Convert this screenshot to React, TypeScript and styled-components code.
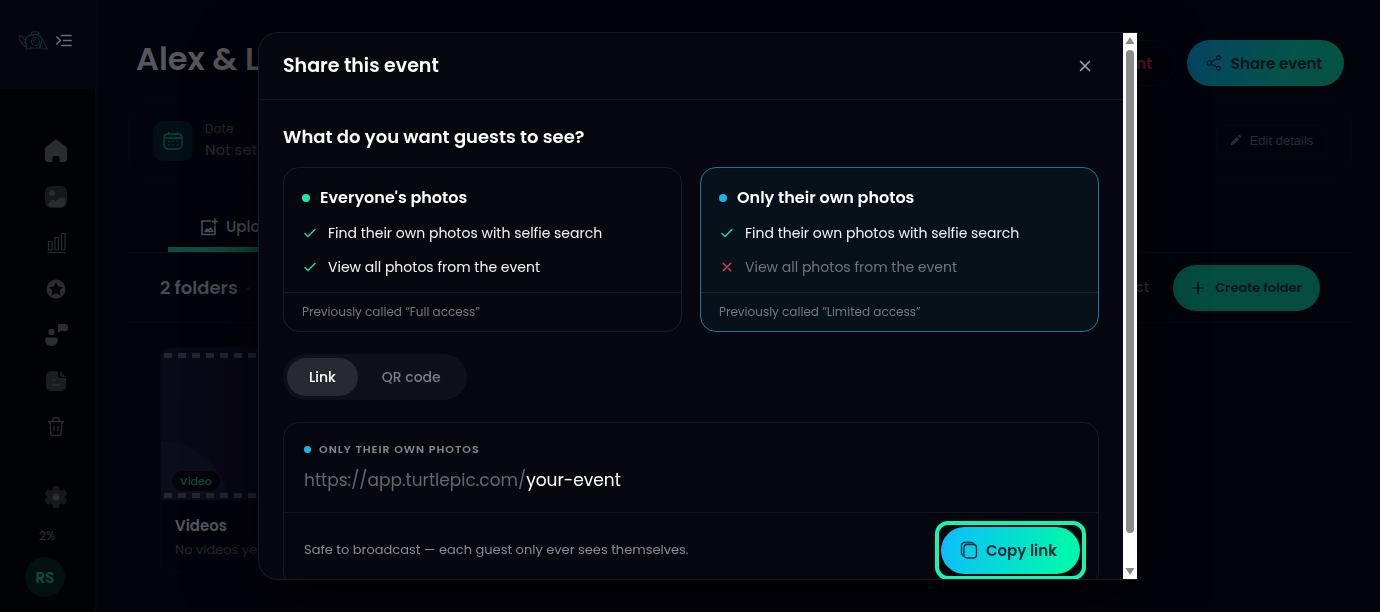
import React from "react";
import styled, { createGlobalStyle, css } from "styled-components";

const GlobalStyle = createGlobalStyle`
  *, *::before, *::after { box-sizing: border-box; }
  html, body { margin: 0; background: #03030c; }
  body, button, input { font-family: Poppins, Inter, "Open Sans", sans-serif; }
  body { color: #fff; overflow: hidden; }
  h1, h2, h3, p, ul { margin: 0; padding: 0; font-weight: inherit; }
  ul { list-style: none; }
  button { border: 0; background: none; padding: 0; color: inherit; cursor: pointer; }
  a { color: inherit; text-decoration: none; }
  svg { display: block; flex: none; }
`;

/* ---------- page behind the dialog ---------- */

const Page = styled.div`
  display: flex;
  min-height: 100vh;
  background: #03030c;
`;

const Sidebar = styled.aside`
  flex: 0 0 97px;
  display: flex;
  flex-direction: column;
`;

const Brand = styled.div`
  height: 89px;
  padding: 8px 0 16px 18px;
  display: flex;
  align-items: center;
  gap: 7px;
  background: #04050e;
  color: #6c6c70;
`;

const SideNav = styled.nav`
  flex: 1;
  display: flex;
  flex-direction: column;
  align-items: flex-start;
  background: #010204;
  border-right: 2px solid #08090e;
  padding-top: 50px;
  color: #2b2c30;
`;

const SideLink = styled.a<{ $gap?: number }>`
  display: flex;
  width: 24px;
  height: 24px;
  margin: 0 0 ${(p) => p.$gap ?? 22}px 44px;
  align-items: center;
  justify-content: center;
`;

const Usage = styled.span`
  margin: 0 0 11px 39px;
  font-size: 12px;
  line-height: 20px;
  color: #323338;
`;

const Avatar = styled.button`
  width: 40px;
  height: 40px;
  margin-left: 25px;
  border-radius: 50%;
  background: #02110f;
  color: #104c3c;
  font-size: 15px;
  font-weight: 600;
`;

const Main = styled.main`
  flex: 1;
  min-width: 0;
  padding: 32px 28px 0 31px;
`;

const PageHeader = styled.header`
  display: flex;
  align-items: center;
  height: 62px;
  padding: 0 8px;
  gap: 12px;
`;

const PageTitle = styled.h1`
  flex: 1;
  padding-bottom: 8px;
  font-size: 32px;
  line-height: 40px;
  font-weight: 600;
  color: #56565c;
`;

const PillButton = styled.button<{ $kind: "share" | "create" | "danger" | "plain" }>`
  display: flex;
  align-items: center;
  justify-content: center;
  height: 46px;
  border-radius: 23px;
  font-weight: 600;
  white-space: nowrap;
  ${(p) =>
    p.$kind === "share" &&
    css`
      width: 157px;
      padding-right: 4px;
      gap: 8px;
      font-size: 15px;
      color: #03151b;
      background: linear-gradient(110deg, #044463, #055349 65%, #055341);
    `}
  ${(p) =>
    p.$kind === "create" &&
    css`
      width: 147px;
      gap: 10px;
      font-size: 13px;
      color: #03151b;
      background: #044d40;
    `}
  ${(p) =>
    p.$kind === "danger" &&
    css`
      padding: 0 22px;
      border: 1px solid #08080f;
      font-size: 15px;
      color: #5a1623;
    `}
  ${(p) =>
    p.$kind === "plain" &&
    css`
      padding: 0 12px;
      font-size: 14px;
      font-weight: 500;
      color: #36363c;
    `}
`;

const DateCard = styled.section`
  display: flex;
  align-items: center;
  height: 78px;
  margin-top: 8px;
  padding: 0 24px;
  gap: 12px;
  border: 1px solid #05050f;
  border-radius: 14px;
`;

const DateTile = styled.div`
  display: grid;
  place-items: center;
  width: 40px;
  height: 40px;
  border-radius: 10px;
  background: #020f13;
  color: #10473d;
`;

const DateText = styled.div`
  flex: 1;
  padding-bottom: 2px;
  color: #2c2c33;
  font-size: 15px;
  line-height: 22px;
`;

const DateLabel = styled.div`
  color: #26262d;
  font-size: 12px;
  line-height: 20px;
`;

const EditButton = styled.button`
  display: flex;
  align-items: center;
  justify-content: center;
  gap: 8px;
  width: 111px;
  height: 32px;
  padding-bottom: 2px;
  border: 1px solid #05060e;
  border-radius: 8px;
  font-family: "Liberation Sans", sans-serif;
  font-size: 13px;
  color: #2b2b32;
`;

const Tabs = styled.nav`
  display: flex;
  height: 73px;
  padding-left: 40px;
  align-items: flex-end;
  border-bottom: 1px solid #090a14;
`;

const Tab = styled.a`
  display: flex;
  align-items: center;
  width: 150px;
  height: 46px;
  padding: 0 0 0 32px;
  gap: 8px;
  border-bottom: 5px solid #104c40;
  font-size: 15px;
  font-weight: 500;
  color: #515158;
`;

const FolderBar = styled.div`
  display: flex;
  align-items: center;
  height: 70px;
  padding: 0 32px;
  gap: 12px;
  border-bottom: 1px solid #07080f;
`;

const FolderCount = styled.h2`
  flex: 1;
  font-size: 18px;
  font-weight: 600;
  color: #4a4a52;
`;

const Separator = styled.span`
  margin-left: 8px;
  color: #16161e;
`;

const Folder = styled.article`
  width: 240px;
  margin: 24px 0 0 32px;
  border: 1px solid #06060f;
  border-radius: 10px;
  overflow: hidden;
`;

const Film = styled.div`
  display: flex;
  flex-direction: column;
  justify-content: space-between;
  height: 152px;
  padding: 5px 3px 2px;
  background: radial-gradient(circle at 0 162px, #0d0c1a 68px, transparent 69px),
    linear-gradient(100deg, #0a0918, #06060f);
`;

const Perforation = styled.div`
  height: 5px;
  background: repeating-linear-gradient(90deg, #25252e 0 8px, transparent 8px 14px);
`;

const Tag = styled.span`
  align-self: flex-start;
  margin: auto 0 2px 8px;
  padding: 0 8px;
  border-radius: 10px;
  background: #02060b;
  color: #104c40;
  font-size: 11px;
  line-height: 20px;
  font-weight: 500;
`;

const FolderText = styled.div`
  padding: 14px 14px 10px;
  color: #27272e;
  font-size: 13px;
  line-height: 24px;
`;

const FolderName = styled.h3`
  color: #56565c;
  font-size: 15px;
  line-height: 24px;
  font-weight: 600;
`;

/* ---------- dialog ---------- */

const Overlay = styled.div`
  position: fixed;
  inset: 0;
  display: flex;
  justify-content: center;
  padding: 32px 16px 32px 31px;
`;

const Dialog = styled.section`
  display: flex;
  width: 100%;
  max-width: 879px;
  height: 100%;
  border: 1px solid #191a20;
  border-right: 0;
  border-radius: 20px 0 0 20px;
  background: #07080f;
  overflow: hidden;
  box-shadow: 0 24px 64px rgba(0, 0, 0, 0.75);
`;

const DialogContent = styled.div`
  flex: 1;
  min-width: 0;
  overflow: hidden;
`;

const DialogHeader = styled.header`
  display: flex;
  align-items: center;
  justify-content: space-between;
  height: 67px;
  padding: 0 32px 0 24px;
  border-bottom: 1px solid #13141a;
`;

const DialogTitle = styled.h2`
  font-size: 19px;
  line-height: 28px;
  font-weight: 600;
`;

const CloseButton = styled.button`
  color: #a5a5a9;
`;

const DialogBody = styled.div`
  padding: 22px 24px;
`;

const Question = styled.h3`
  font-size: 18px;
  line-height: 30px;
  font-weight: 600;
`;

const Choices = styled.div`
  display: grid;
  grid-template-columns: 1fr 1fr;
  gap: 18px;
  margin-top: 15px;
`;

const Choice = styled.button<{ $on?: boolean }>`
  display: flex;
  flex-direction: column;
  height: 165px;
  border: 1px solid ${(p) => (p.$on ? "#23749a" : "#1c1d23")};
  border-radius: 16px;
  background: ${(p) => (p.$on ? "#06111a" : "transparent")};
  text-align: left;
  overflow: hidden;
`;

const ChoiceTitle = styled.span`
  display: flex;
  align-items: center;
  gap: 10px;
  padding: 18px 18px 1px;
  font-size: 16px;
  line-height: 24px;
  font-weight: 600;
`;

const Dot = styled.span<{ $color: string; $small?: boolean }>`
  width: ${(p) => (p.$small ? 7 : 8)}px;
  height: ${(p) => (p.$small ? 7 : 8)}px;
  border-radius: 50%;
  background: ${(p) => p.$color};
`;

const Feature = styled.span<{ $off?: boolean }>`
  display: flex;
  align-items: center;
  gap: 10px;
  margin-top: 10px;
  padding-left: 18px;
  font-size: 14px;
  line-height: 24px;
  color: ${(p) => (p.$off ? "#70757b" : "#f4f4f5")};
`;

const ChoiceNote = styled.span<{ $on?: boolean }>`
  width: 100%;
  margin-top: auto;
  padding: 0 18px;
  border-top: 1px solid ${(p) => (p.$on ? "#15242d" : "#1a1b21")};
  font-size: 12px;
  line-height: 38px;
  color: #76787e;
`;

const Segments = styled.div`
  display: inline-flex;
  gap: 2px;
  height: 46px;
  margin-top: 22px;
  padding: 4px;
  border-radius: 23px;
  background: #101118;
  vertical-align: top;
`;

const Segment = styled.button<{ $on?: boolean }>`
  padding: 0 22px;
  border-radius: 19px;
  background: ${(p) => (p.$on ? "#292a31" : "transparent")};
  color: ${(p) => (p.$on ? "#fff" : "#7c7d82")};
  font-size: 14px;
  font-weight: 500;
`;

const LinkCard = styled.section`
  margin-top: 22px;
  border: 1px solid #191a20;
  border-radius: 16px;
`;

const LinkInfo = styled.div`
  height: 89px;
  padding: 17px 20px 0;
`;

const LinkLabel = styled.div`
  display: flex;
  align-items: center;
  gap: 8px;
  font-size: 11px;
  line-height: 18px;
  font-weight: 600;
  letter-spacing: 1px;
  color: #85868b;
`;

const LinkUrl = styled.a`
  display: inline-block;
  margin-top: 8px;
  font-size: 17px;
  line-height: 28px;
`;

const UrlHost = styled.span`
  color: #66676c;
`;

const LinkActions = styled.div`
  display: flex;
  align-items: center;
  justify-content: space-between;
  height: 75px;
  padding: 0 12px 0 20px;
  border-top: 1px solid #14151b;
  font-size: 13px;
  color: #8b8c91;
`;

const Highlight = styled.div`
  border: 4px solid #14f5b4;
  border-radius: 13px;
  padding: 2px;
  background: #03040a;
`;

const CopyButton = styled.button`
  display: flex;
  align-items: center;
  justify-content: center;
  gap: 8px;
  width: 139px;
  height: 47px;
  padding-right: 4px;
  border-radius: 24px;
  background: linear-gradient(105deg, #0cbcff, #00f5b0 85%);
  color: #06283a;
  font-size: 15px;
  font-weight: 600;
`;

const Scrollbar = styled.div`
  flex: 0 0 14px;
  display: flex;
  flex-direction: column;
  align-items: center;
  padding: 4px 0;
  gap: 6px;
  background: #fdfdfd;
  color: #8a8a8a;
`;

const ScrollThumb = styled.div`
  width: 8px;
  flex: 484 1 0;
  border-radius: 4px;
  background: #8a8a8a;
`;

const ScrollSpace = styled.div`
  flex: 23 1 0;
`;

/* ---------- icons ---------- */

const Stroke = ({ size, width = 1.5, box = 24, children }: { size: number; width?: number; box?: number; children: React.ReactNode }) => (
  <svg width={size} height={size} viewBox={`0 0 ${box} ${box}`} fill="none" stroke="currentColor" strokeWidth={width} strokeLinecap="round" strokeLinejoin="round" aria-hidden="true">
    {children}
  </svg>
);

const Solid = ({ children }: { children: React.ReactNode }) => (
  <svg width="24" height="24" viewBox="0 0 24 24" fill="currentColor" aria-hidden="true">
    {children}
  </svg>
);

const Turtle = () => (
  <svg width="31" height="20" viewBox="0 0 31 20" fill="none" stroke="#152a35" strokeWidth="1.1" strokeLinejoin="round" strokeLinecap="round" aria-hidden="true">
    <path d="M1 7.500c-.5-2.400 2-3.500 3.500-2 1 1 .5 2.500 1.500 3 1.500.5 2-2 4-3.500M1 7.500c0 2 2 2.500 3 4.500 1 2 2.500 3.500 5 4l-1 2h4l1-1.500M10 5c-3 3-3 7-1 11M10 5l4-1h6l3 2c3 3 3 7 6.500 12h-6l-1.500-2M13 17h8l1.500-4M13.500 1h7v2.500h-7zM6 11l3 2M24 9l-2 7" />
    <circle cx="17.500" cy="10.500" r="4" />
    <path d="M15.500 10.500a2 2 0 0 1 2-2" />
  </svg>
);

const Check = () => (
  <Stroke size={16} box={16} width={1.5}>
    <path d="m3 8.500 3 3 7-7" stroke="#2fd0a0" />
  </Stroke>
);

const Cross = () => (
  <Stroke size={16} box={16} width={1.4}>
    <path d="m4.200 4.200 7.600 7.600m0-7.600-7.600 7.600" stroke="#d0425c" />
  </Stroke>
);

export default function App() {
  return (
    <>
      <GlobalStyle />
      <Page>
        <Sidebar>
          <Brand>
            <Turtle />
            <Stroke size={16} box={16} width={1.5}>
              <path d="m.8 4 3.600 3.500L.8 11M5.500 2.500h9.700M7.500 7.500h7.700M5.500 12.500h9.700" />
            </Stroke>
          </Brand>
          <SideNav aria-label="Main">
            <SideLink href="#home" aria-label="Home">
              <Solid>
                <path d="M10.400 1.200a2.600 2.600 0 0 1 3.200 0l8.200 6.500c.9.700 1.200 1.500 1.200 2.600V20a3 3 0 0 1-3 3h-4.500v-4.500a1.500 1.500 0 0 0-1.500-1.500h-4a1.500 1.500 0 0 0-1.500 1.500V23H4a3 3 0 0 1-3-3v-9.700c0-1.100.300-1.900 1.200-2.600z" />
              </Solid>
            </SideLink>
            <SideLink href="#photos" aria-label="Photos">
              <Solid>
                <rect x="1" y="1" width="22" height="22" rx="6" fill="#17181c" />
                <circle cx="8" cy="8" r="3" />
                <path d="M4 20c2-4.500 5-6 8-3.500 2-4 5.500-5 9-2.500v4a4 4 0 0 1-4 4H7a4 4 0 0 1-3-2z" />
              </Solid>
            </SideLink>
            <SideLink href="#analytics" aria-label="Analytics">
              <Stroke size={24} width={1.2}>
                <path d="M4 21.500h17M4.500 10.500h3.500v8.500h-3.500zM11 6.500h3.500v12.500h-3.500zM17.500 2.500h3.500v16.500h-3.500z" />
              </Stroke>
            </SideLink>
            <SideLink href="#favorites" aria-label="Favorites">
              <Solid>
                <circle cx="12" cy="12" r="9.500" />
                <path fill="#010204" d="m12 5 2.200 4.500 4.900.700-3.600 3.400.9 4.900-4.400-2.400-4.400 2.400.9-4.900-3.600-3.400 4.900-.7z" />
              </Solid>
            </SideLink>
            <SideLink href="#guests" aria-label="Guests">
              <Solid>
                <circle cx="7.500" cy="9" r="3.200" />
                <path d="M3 14.500h9a2 2 0 0 1 2 2c0 4-3 6.500-6.500 6.500S1 20.500 1 16.500a2 2 0 0 1 2-2zM15 1h7a2 2 0 0 1 2 2v3a2 2 0 0 1-2 2h-5l-3 1.500V3a2 2 0 0 1 1-2z" />
              </Solid>
            </SideLink>
            <SideLink href="#documents" aria-label="Documents">
              <Solid>
                <path fill="#1c1d21" d="M7 2h7v4a3 3 0 0 0 3 3h5v8a5 5 0 0 1-5 5H7a5 5 0 0 1-5-5V7a5 5 0 0 1 5-5zM16 2l6 6h-4a2 2 0 0 1-2-2z" />
                <path d="M8 11h4M8 16h8" stroke="currentColor" strokeWidth="1.500" />
              </Solid>
            </SideLink>
            <SideLink href="#trash" aria-label="Trash" $gap={46}>
              <Stroke size={24} width={1.400}>
                <path d="M4.500 6.500h15M9 6V4.500A1.500 1.500 0 0 1 10.500 3h3A1.500 1.500 0 0 1 15 4.500V6M6 7l.8 11.500a2 2 0 0 0 2 2h6.400a2 2 0 0 0 2-2L18 7M10 11.500v4M14 11.500v4" />
              </Stroke>
            </SideLink>
            <SideLink href="#settings" aria-label="Settings" $gap={17}>
              <Solid>
                <path fill="#17181c" stroke="#17181c" strokeWidth="2" strokeLinejoin="round" d="M10 2h4l.8 3.500 2 1.100L20 5.500l2 3.500-2.500 2.500v1L22 15l-2 3.500-3.200-1.100-2 1.100L14 22h-4l-.8-3.500-2-1.100L4 18.500 2 15l2.500-2.500v-1L2 9l2-3.500 3.200 1.100 2-1.100z" />
                <circle cx="12" cy="12" r="3.500" />
              </Solid>
            </SideLink>
            <Usage>2%</Usage>
            <Avatar>RS</Avatar>
          </SideNav>
        </Sidebar>
        <Main>
          <PageHeader>
            <PageTitle>Alex &amp; L</PageTitle>
            <PillButton $kind="danger">Delete event</PillButton>
            <PillButton $kind="share">
              <Stroke size={18}>
                <circle cx="6" cy="12" r="3" />
                <circle cx="18" cy="5" r="2.500" />
                <circle cx="18" cy="19" r="2.500" />
                <path d="m8.500 10.500 7-4M8.500 13.500l7 4" />
              </Stroke>
              Share event
            </PillButton>
          </PageHeader>
          <DateCard>
            <DateTile>
              <Stroke size={20} box={20} width={1.300}>
                <path d="M5 3h10a4 4 0 0 1 4 3.500V14a4 4 0 0 1-4 4H5a4 4 0 0 1-4-4V6.500A4 4 0 0 1 5 3zM1.500 7h17M5.500 1.500V3M14.500 1.500V3" />
                <path d="M5.500 10.500h.5M9.800 10.500h.5M14 10.500h.5M5.500 14h.5M9.800 14h.5M14 14h.5" strokeWidth="1" />
              </Stroke>
            </DateTile>
            <DateText>
              <DateLabel>Date</DateLabel>
              Not set
            </DateText>
            <EditButton>
              <svg width="12" height="12" viewBox="0 0 14 14" fill="currentColor" aria-hidden="true">
                <path d="m1 13 .8-3.500 6.400-6.400 2.700 2.700-6.400 6.400zM9 2.300l.9-.9a1.500 1.500 0 0 1 2.100 0l.6.6a1.500 1.500 0 0 1 0 2.100l-.9.900z" />
              </svg>
              Edit details
            </EditButton>
          </DateCard>
          <Tabs aria-label="Event sections">
            <Tab href="#uploads">
              <Stroke size={18} box={18} width={1.500}>
                <path d="M10.500 3H2v13.500h13V8M15 1v5M12.500 3.500h5M5 13.500l2-2.500 1.500 1.500 2-2.500 2.500 3.500z" />
              </Stroke>
              Uploads
            </Tab>
          </Tabs>
          <FolderBar>
            <FolderCount>
              2 folders<Separator>·</Separator>
            </FolderCount>
            <PillButton $kind="plain">Select</PillButton>
            <PillButton $kind="create">
              <Stroke size={14} box={14} width={1.600}>
                <path d="M7 1.200v11.600M1.200 7h11.600" />
              </Stroke>
              Create folder
            </PillButton>
          </FolderBar>
          <Folder>
            <Film>
              <Perforation />
              <Tag>Video</Tag>
              <Perforation />
            </Film>
            <FolderText>
              <FolderName>Videos</FolderName>
              No videos yet
            </FolderText>
          </Folder>
        </Main>
      </Page>

      <Overlay>
        <Dialog role="dialog" aria-modal="true" aria-labelledby="share-title">
          <DialogContent>
            <DialogHeader>
              <DialogTitle id="share-title">Share this event</DialogTitle>
              <CloseButton aria-label="Close">
                <Stroke size={12} box={12} width={1.500}>
                  <path d="m1.500 1.500 9 9m0-9-9 9" />
                </Stroke>
              </CloseButton>
            </DialogHeader>
            <DialogBody>
              <Question>What do you want guests to see?</Question>
              <Choices>
                <Choice aria-pressed="false">
                  <ChoiceTitle>
                    <Dot $color="#1fe5ae" />
                    Everyone's photos
                  </ChoiceTitle>
                  <Feature>
                    <Check />
                    Find their own photos with selfie search
                  </Feature>
                  <Feature>
                    <Check />
                    View all photos from the event
                  </Feature>
                  <ChoiceNote>Previously called “Full access”</ChoiceNote>
                </Choice>
                <Choice $on aria-pressed="true">
                  <ChoiceTitle>
                    <Dot $color="#1bb5ea" />
                    Only their own photos
                  </ChoiceTitle>
                  <Feature>
                    <Check />
                    Find their own photos with selfie search
                  </Feature>
                  <Feature $off>
                    <Cross />
                    View all photos from the event
                  </Feature>
                  <ChoiceNote $on>Previously called “Limited access”</ChoiceNote>
                </Choice>
              </Choices>
              <Segments>
                <Segment $on aria-pressed="true">Link</Segment>
                <Segment aria-pressed="false">QR code</Segment>
              </Segments>
              <LinkCard>
                <LinkInfo>
                  <LinkLabel>
                    <Dot $small $color="#1bb5ea" />
                    ONLY THEIR OWN PHOTOS
                  </LinkLabel>
                  <LinkUrl href="#event">
                    <UrlHost>https://app.turtlepic.com/</UrlHost>your-event
                  </LinkUrl>
                </LinkInfo>
                <LinkActions>
                  <span>Safe to broadcast — each guest only ever sees themselves.</span>
                  <Highlight>
                    <CopyButton>
                      <Stroke size={18} box={18} width={1.300}>
                        <rect x="4" y="3.500" width="12.500" height="13.500" rx="3" />
                        <path d="M3.500 15A3 3 0 0 1 1.500 12V4.500a3 3 0 0 1 3-3H11a3 3 0 0 1 3 1.800" />
                      </Stroke>
                      Copy link
                    </CopyButton>
                  </Highlight>
                </LinkActions>
              </LinkCard>
            </DialogBody>
          </DialogContent>
          <Scrollbar aria-hidden="true">
            <svg width="10" height="7" viewBox="0 0 10 7" fill="currentColor">
              <path d="M5 0 9.500 7h-9z" />
            </svg>
            <ScrollThumb />
            <ScrollSpace />
            <svg width="10" height="7" viewBox="0 0 10 7" fill="currentColor">
              <path d="M5 7 9.500 0h-9z" />
            </svg>
          </Scrollbar>
        </Dialog>
      </Overlay>
    </>
  );
}
